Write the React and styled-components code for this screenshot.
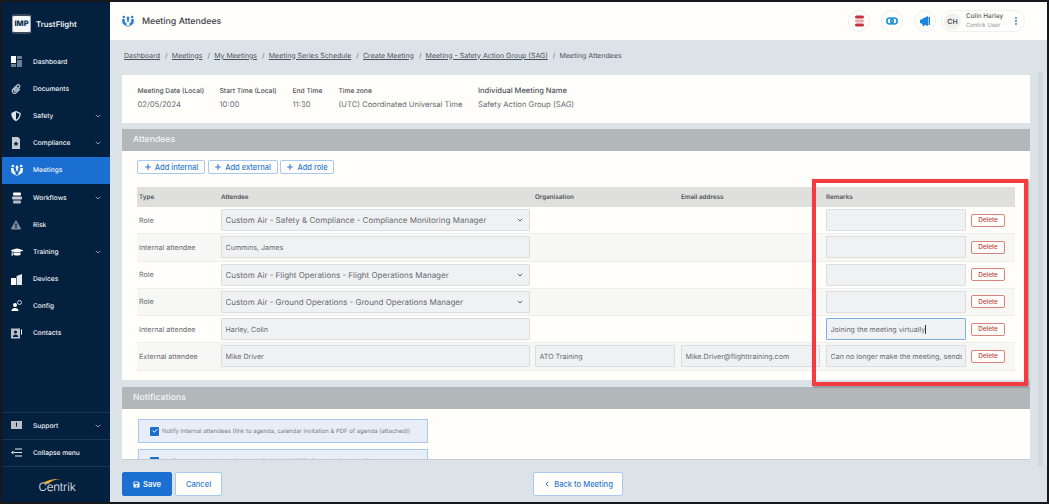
import React from 'react';
import styled, { createGlobalStyle } from 'styled-components';
import { FaPaperclip, FaShieldAlt, FaGraduationCap, FaExclamationTriangle, FaSave } from 'react-icons/fa';
import { ChevronDown, ChevronLeft, Plus, EllipsisVertical, Check } from 'lucide-react';

const Global = createGlobalStyle`
  html, body { margin: 0; padding: 0; background: #111; }
  * { box-sizing: border-box; }
  body { font-family: Inter, "Liberation Sans", sans-serif; text-rendering: geometricPrecision; }
`;
const Frame = styled.div`
  width: 1049px; height: 504px; border: 2px solid #16181c;
  display: flex; background: #dce3e8; overflow: hidden; position: relative;
`;
const Sidebar = styled.aside`
  width: 108px; flex: none; background: #04203f; display: flex; flex-direction: column; color: #e8edf2;
`;
const Brand = styled.div`
  height: 46px; display: flex; align-items: center; gap: 5px; padding: 0 0 3px 10px;
`;
const BrandMark = styled.div`
  width: 19px; height: 20px; border-radius: 3px; background: #f4f6f8;
  border-style: solid; border-width: 2px 1px; border-color: #3a4a5c #9aa6b2; color: #0d2a4c;
  font-size: 7.5px; font-weight: 800; display: flex; align-items: center; justify-content: center;
`;
const BrandName = styled.div`font-size: 7.8px; font-weight: 600; color: #eef2f6;`;
const NavList = styled.nav`flex: 1; display: flex; flex-direction: column;`;
const NavRow = styled.div`
  height: 27.2px; display: flex; align-items: center; padding: 0 8px 0 9px;
  background: ${p => (p.$active ? '#1a6fd0' : 'transparent')};
  border-top: ${p => (p.$rule ? '1px solid #173655' : 'none')};
  font-size: 6.6px; font-weight: 500; color: #edf1f5;
`;
const NavIcon = styled.span`
  width: 22px; flex: none; display: flex; align-items: center; color: #c4ccd5;
`;
const NavText = styled.span`flex: 1;`;
const NavChevron = styled(ChevronDown)`color: #aab4bf;`;
const Logo = styled.div`
  height: 36px; border-top: 1px solid #173655; display: flex; align-items: center; justify-content: center;
  position: relative; font-size: 11.6px; color: #eef2f6; font-weight: 300; letter-spacing: -0.2px; padding: 5px 0 0 2px;
`;
const Swoosh = styled.svg`position: absolute; left: 41px; top: 11px;`;
const Main = styled.main`flex: 1; min-width: 0; display: flex; flex-direction: column;`;
const TopBar = styled.header`
  height: 38px; flex: none; background: #fffefb; display: flex; align-items: center; padding: 0 22px 0 12px;
`;
const TitleIcon = styled.span`display: flex; width: 19px; color: #2f7fd6;`;
const Title = styled.h1`
  margin: 0; flex: 1; font-size: 8.8px; font-weight: 500; color: #3c424a; padding-left: 1px;
`;
const RoundIcon = styled.div`
  width: 22px; height: 22px; border-radius: 50%; border: 1px solid #eef0f1; margin-right: ${p => p.$gap}px;
  display: flex; align-items: center; justify-content: center;
`;
const UserPill = styled.div`
  width: 84px; height: 22px; border: 1px solid #eef0f1; border-radius: 11px; display: flex; align-items: center; padding-left: 2px;
`;
const Avatar = styled.div`
  width: 17px; height: 17px; border-radius: 50%; background: #f1f1f1; color: #4c5158;
  font-size: 7px; font-weight: 600; display: flex; align-items: center; justify-content: center;
`;
const UserText = styled.div`flex: 1; padding-left: 5px; line-height: 9px;`;
const UserName = styled.div`font-size: 6.4px; font-weight: 500; color: #555a62;`;
const UserRole = styled.div`font-size: 5.8px; color: #8b9097;`;
const Kebab = styled(EllipsisVertical)`color: #1a6fd0; margin-right: 3px;`;
const Content = styled.div`flex: 1; min-height: 0; display: flex; padding-left: 12px;`;
const Column = styled.div`width: 908px; flex: none; display: flex; flex-direction: column;`;
const Crumbs = styled.div`
  height: 35px; flex: none; display: flex; align-items: center; padding: 0 0 5px 2px; font-size: 7px; color: #4a5058; white-space: nowrap;
`;
const Crumb = styled.a`color: #4a5058; text-decoration: underline;`;
const Sep = styled.span`padding: 0 4.2px 0 5px; color: #6a7078;`;
const Scroll = styled.div`
  flex: 1; min-height: 0; overflow: hidden; border-bottom: 1px solid #c6ccd0;
  display: flex; flex-direction: column;
`;
const Card = styled.section`background: #fffefb; flex: none;`;
const SummaryCard = styled(Card)`
  height: 48px; display: flex; padding: 12px 0 0 15.5px; margin-bottom: 6px;
`;
const SummaryCol = styled.div`width: ${p => p.$w}px; flex: none;`;
const SummaryLabel = styled.div`
  font-size: ${p => (p.$wide ? '7.5px' : '6.7px')}; font-weight: 500; color: #4e535a; line-height: 8px; white-space: nowrap;
`;
const SummaryValue = styled.div`font-size: 7.65px; color: #666b72; line-height: 9px; margin-top: 5px; white-space: nowrap;`;
const SectionHead = styled.div`
  height: 22px; background: #b2b7ba; color: #f3f5f6; font-size: 8.7px; font-weight: 500;
  display: flex; align-items: center; padding-left: 11px;
`;
const AttendeesBody = styled.div`height: 229px; padding: 9px 15px 0 15px;`;
const AddRow = styled.div`display: flex; gap: 2.5px; margin-bottom: 13px;`;
const OutlineBtn = styled.button`
  height: 14px; padding: 0; width: ${p => p.$w}px; background: #fffefb; border: 1px solid #a9c9ee; border-radius: 2px;
  color: #2f7ad0; font: 500 7.5px Inter, sans-serif; display: flex; align-items: center; justify-content: center; gap: 3px;
`;
const Row = styled.div`
  display: grid; grid-template-columns: 84px 314px 146px 145px 189px; align-items: center;
  height: 27.25px; background: ${p => (p.$alt ? '#f7f7f6' : '#fffefb')}; border-bottom: 1px solid #eeeeec;
  font-size: 7.1px; color: #666a70;
`;
const HeadRow = styled(Row)`
  height: 20px; background: #dfdfdd; border-bottom: none; font-size: 6.3px; font-weight: 600; color: #50555c;
`;
const TypeCell = styled.div`padding-left: 2px;`;
const Cell = styled.div`display: flex; align-items: center;`;
const Field = styled.div`
  width: ${p => p.$w}px; height: 22px; background: #f0f1f3;
  border: 1px solid ${p => (p.$focus ? '#7db0e6' : '#dcdddf')}; border-radius: 1px;
  font-size: ${p => (p.$select ? '8px' : '7.1px')}; color: #666b72;
  display: flex; align-items: center; padding: 0 3.5px; white-space: nowrap; overflow: hidden;
`;
const FieldText = styled.span`flex: ${p => (p.$hug ? 'none' : 1)}; overflow: hidden;`;
const FieldChevron = styled(ChevronDown)`color: #444; margin-right: 2px; flex: none;`;
const Caret = styled.span`width: 1px; height: 9px; background: #333; flex: none;`;
const DeleteBtn = styled.button`
  width: 34px; height: 13px; margin-left: 5px; padding: 0; background: #fffefb; border: 1px solid #d8837c; border-radius: 2px;
  color: #c0453c; font: 500 6.4px Inter, sans-serif; flex: none;
`;
const NotifyCard = styled(Card)`margin-top: 7px; flex: 1;`;
const NotifyBody = styled.div`padding: 10px 16px 0;`;
const NotifyBox = styled.label`
  width: 290px; height: 24px; background: #e8eef7; border: 1px solid #a9c9ee; display: flex; align-items: center;
  padding-left: 11px; gap: 3px; font-size: 5.95px; color: #7b8087; margin-bottom: 6px; white-space: nowrap;
`;
const Tick = styled.span`
  width: 9px; height: 9px; background: #1a6fd0; border-radius: 1px; display: flex; align-items: center; justify-content: center; color: #fff; flex: none;
`;
const Track = styled.div`width: 5px; flex: none; margin: 31px 0 0 8px; background: #d1d9de; height: 395px;`;
const Footer = styled.footer`height: 42px; flex: none; display: flex; align-items: flex-start; padding-top: 12px;`;
const SaveBtn = styled.button`
  width: 50px; height: 24px; padding: 0; background: #1a6fd0; border: 1px solid #1a6fd0; border-radius: 2px; color: #f4f8fc;
  font: 600 7.6px Inter, sans-serif; display: flex; align-items: center; justify-content: center; gap: 3px; margin-right: 3px;
`;
const FootBtn = styled.button`
  width: ${p => p.$w}px; height: 24px; padding: 0; margin-left: ${p => p.$ml || 0}px; background: #fffefb; border: 1px solid #a9c9ee; border-radius: 2px;
  color: #2f7ad0; font: 500 7.6px Inter, sans-serif; display: flex; align-items: center; justify-content: center; gap: 3px;
`;
const Highlight = styled.div`
  position: absolute; left: 810px; top: 177px; width: 216px; height: 207px; border: 4px solid #f23c3f;
  box-shadow: 1px 1px 2px rgba(40,50,60,.55); pointer-events: none;
`;

const DashIcon = () => <svg width="11" height="11" viewBox="0 0 11 11" fill="currentColor"><rect x="0" y="0" width="5" height="7" fill="#fff"/><rect x="6" y="0" width="5" height="3" opacity=".55"/><rect x="6" y="4" width="5" height="7" opacity=".55"/><rect x="0" y="8" width="5" height="3" opacity=".55"/></svg>;
const DocStar = () => <svg width="10" height="12" viewBox="0 0 10 12" fill="currentColor"><path d="M1 0h6l2 2v10H1z"/><path d="M5 4l.8 1.7 1.8.2-1.3 1.2.4 1.8L5 8l-1.7.9.4-1.8L2.4 5.9l1.8-.2z" fill="#04203f"/></svg>;
const MeetIcon = ({ c = '#fff' }) => <svg width="12" height="12" viewBox="0 0 12 12" fill={c}><circle cx="1.8" cy="2" r="1.3"/><circle cx="10.2" cy="2" r="1.3"/><path d="M0 4h2.6l.5 3.6H4.4L4.4 10 6 11.5 7.6 10V7.6h1.3L9.4 4H12l-.5 4.6L9 10.6H8.4L6 12 3.6 10.6H3L.5 8.6z"/><path d="M6 1l2 2.4H6.9v3.4H5.1V3.4H4z"/></svg>;
const Layers = () => <svg width="12" height="12" viewBox="0 0 12 12" fill="currentColor"><rect x="2" y="0.5" width="8" height="3" rx="1" fill="#fff"/><rect x="1" y="4.5" width="10" height="3" rx="1"/><rect x="2" y="8.5" width="8" height="3" rx="1" fill="#fff" opacity=".7"/></svg>;
const Devices = () => <svg width="11" height="11" viewBox="0 0 11 11" fill="#fff"><rect x="0" y="4" width="5" height="7"/><path d="M5.6 2L11 0v11H5.6z" opacity=".9"/></svg>;
const Config = () => <svg width="11" height="12" viewBox="0 0 11 12" fill="#fff"><circle cx="4" cy="5" r="2"/><path d="M0.5 11c0-2 1.5-3 3.5-3s3.5 1 3.5 3z"/><circle cx="8.5" cy="2.5" r="2" fill="none" stroke="#c4ccd5" strokeWidth="1"/></svg>;
const Contacts = () => <svg width="11" height="11" viewBox="0 0 11 11"><rect x="0" y="0.5" width="9" height="10" fill="#b8c1cb"/><circle cx="4.5" cy="4" r="1.6" fill="#04203f"/><path d="M1.8 9c0-1.8 1.2-2.6 2.7-2.6S7.2 7.2 7.2 9z" fill="#04203f"/><rect x="10" y="1.5" width="1" height="5" fill="#fff"/></svg>;
const Support = () => <svg width="11" height="9" viewBox="0 0 11 9"><rect width="11" height="8" fill="#b6bfc9"/><rect x="5" y="1.5" width="1" height="4" fill="#04203f"/></svg>;
const Collapse = () => <svg width="11" height="9" viewBox="0 0 11 9" fill="#e8edf2"><path d="M0 4.5L2.5 2.5v4z"/><rect x="3" y="4" width="8" height="1"/><rect x="4" y="0.5" width="7" height="1"/><rect x="4" y="7.5" width="7" height="1"/></svg>;
const DbIcon = () => <svg width="9" height="12" viewBox="0 0 9 12"><rect y="0.5" width="9" height="3" rx="1.5" fill="#c7323f"/><rect y="4.5" width="9" height="3" rx="1.5" fill="#e9a2a8"/><rect y="8.5" width="9" height="3" rx="1.5" fill="#c7323f"/></svg>;
const ChainIcon = () => <svg width="12" height="8" viewBox="0 0 12 8" fill="none" stroke="#1a90d8" strokeWidth="1.6"><rect x="0.8" y="1" width="6.4" height="6" rx="3"/><rect x="4.8" y="1" width="6.4" height="6" rx="3"/></svg>;
const HornIcon = () => <svg width="10" height="11" viewBox="0 0 10 11" fill="#1a86e0"><path d="M0 4l8-4v10L0 7z"/><rect x="8.5" y="1" width="1.5" height="8"/><path d="M2 7h2l.6 3H2.8z"/></svg>;

const nav = [
  [<DashIcon />, 'Dashboard'], [<FaPaperclip size={10} />, 'Documents'], [<FaShieldAlt size={10} color="#dfe4ea" />, 'Safety', 1],
  [<DocStar />, 'Compliance', 1], [<MeetIcon />, 'Meetings', 0, 1], [<Layers />, 'Workflows', 1],
  [<FaExclamationTriangle size={10} color="#7f8c9b" />, 'Risk'], [<FaGraduationCap size={12} color="#fff" />, 'Training', 1],
  [<Devices />, 'Devices'], [<Config />, 'Config'], [<Contacts />, 'Contacts'],
];
const crumbs = ['Dashboard', 'Meetings', 'My Meetings', 'Meeting Series Schedule', 'Create Meeting', 'Meeting - Safety Action Group (SAG)'];
const summary = [
  [82, 'Meeting Date (Local)', '02/05/2024'], [73, 'Start Time (Local)', '10:00'], [46, 'End Time', '11:30'],
  [139.5, 'Time zone', '(UTC) Coordinated Universal Time'], [200, 'Individual Meeting Name', 'Safety Action Group (SAG)', true],
];
const rows = [
  { type: 'Role', who: 'Custom Air - Safety & Compliance - Compliance Monitoring Manager', select: true },
  { type: 'Internal attendee', who: 'Cummins, James', alt: true },
  { type: 'Role', who: 'Custom Air - Flight Operations - Flight Operations Manager', select: true },
  { type: 'Role', who: 'Custom Air - Ground Operations - Ground Operations Manager', select: true, alt: true },
  { type: 'Internal attendee', who: 'Harley, Colin', remark: 'Joining the meeting virtually', focus: true },
  { type: 'External attendee', who: 'Mike Driver', org: 'ATO Training', email: 'Mike.Driver@flighttraining.com', remark: 'Can no longer make the meeting, sends', alt: true },
];

export default function App() {
  return (
    <Frame>
      <Global />
      <Sidebar>
        <Brand><BrandMark>IMP</BrandMark><BrandName>TrustFlight</BrandName></Brand>
        <NavList>
          {nav.map(([icon, label, more, active]) => (
            <NavRow key={label} $active={active}>
              <NavIcon>{icon}</NavIcon><NavText>{label}</NavText>
              {more ? <NavChevron size={8} strokeWidth={2.5} /> : null}
            </NavRow>
          ))}
        </NavList>
        <NavRow $rule><NavIcon><Support /></NavIcon><NavText>Support</NavText><NavChevron size={8} strokeWidth={2.5} /></NavRow>
        <NavRow $rule><NavIcon><Collapse /></NavIcon><NavText>Collapse menu</NavText></NavRow>
        <Logo>
          <Swoosh width="18" height="6" viewBox="0 0 18 6"><path d="M0 5C5 2 10 .5 18 1 12 1.5 8 3 5 6z" fill="#e9b23c" /></Swoosh>
          Centrik
        </Logo>
      </Sidebar>
      <Main>
        <TopBar>
          <TitleIcon><MeetIcon c="#2f7fd6" /></TitleIcon>
          <Title>Meeting Attendees</Title>
          <RoundIcon $gap={11}><DbIcon /></RoundIcon>
          <RoundIcon $gap={11}><ChainIcon /></RoundIcon>
          <RoundIcon $gap={5}><HornIcon /></RoundIcon>
          <UserPill>
            <Avatar>CH</Avatar>
            <UserText><UserName>Colin Harley</UserName><UserRole>Centrik User</UserRole></UserText>
            <Kebab size={10} strokeWidth={2.5} />
          </UserPill>
        </TopBar>
        <Content>
          <Column>
            <Crumbs>
              {crumbs.map(c => <React.Fragment key={c}><Crumb>{c}</Crumb><Sep>/</Sep></React.Fragment>)}
              <span>Meeting Attendees</span>
            </Crumbs>
            <Scroll>
              <SummaryCard>
                {summary.map(([w, l, v, wide]) => (
                  <SummaryCol key={l} $w={w}><SummaryLabel $wide={wide}>{l}</SummaryLabel><SummaryValue>{v}</SummaryValue></SummaryCol>
                ))}
              </SummaryCard>
              <Card>
                <SectionHead>Attendees</SectionHead>
                <AttendeesBody>
                  <AddRow>
                    <OutlineBtn $w={68}><Plus size={8} strokeWidth={3.5} />Add internal</OutlineBtn>
                    <OutlineBtn $w={70}><Plus size={8} strokeWidth={3.5} />Add external</OutlineBtn>
                    <OutlineBtn $w={54}><Plus size={8} strokeWidth={3.5} />Add role</OutlineBtn>
                  </AddRow>
                  <HeadRow>
                    <TypeCell>Type</TypeCell><Cell>Attendee</Cell><Cell>Organisation</Cell><Cell>Email address</Cell><Cell>Remarks</Cell>
                  </HeadRow>
                  {rows.map((r, i) => (
                    <Row key={i} $alt={r.alt}>
                      <TypeCell>{r.type}</TypeCell>
                      <Cell>
                        <Field $w={309} $select={r.select}><FieldText>{r.who}</FieldText>{r.select && <FieldChevron size={8} strokeWidth={2.5} />}</Field>
                      </Cell>
                      <Cell>{r.org && <Field $w={140}><FieldText>{r.org}</FieldText></Field>}</Cell>
                      <Cell>{r.email && <Field $w={139}><FieldText>{r.email}</FieldText></Field>}</Cell>
                      <Cell>
                        <Field $w={140} $focus={r.focus}>
                          <FieldText $hug={r.focus}>{r.remark}</FieldText>
                          {r.focus && <Caret />}
                        </Field>
                        <DeleteBtn>Delete</DeleteBtn>
                      </Cell>
                    </Row>
                  ))}
                </AttendeesBody>
              </Card>
              <NotifyCard>
                <SectionHead>Notifications</SectionHead>
                <NotifyBody>
                  <NotifyBox><Tick><Check size={6} strokeWidth={4} /></Tick>Notify internal attendees (link to agenda, calendar invitation &amp; PDF of agenda (attached))</NotifyBox>
                  <NotifyBox><Tick><Check size={6} strokeWidth={4} /></Tick>Notify external attendees (calendar invitation &amp; PDF of agenda (attached))</NotifyBox>
                </NotifyBody>
              </NotifyCard>
            </Scroll>
            <Footer>
              <SaveBtn><FaSave size={7} />Save</SaveBtn>
              <FootBtn $w={47}>Cancel</FootBtn>
              <FootBtn $w={90} $ml={311}><ChevronLeft size={8} strokeWidth={3} />Back to Meeting</FootBtn>
            </Footer>
          </Column>
          <Track />
        </Content>
      </Main>
      <Highlight />
    </Frame>
  );
}
